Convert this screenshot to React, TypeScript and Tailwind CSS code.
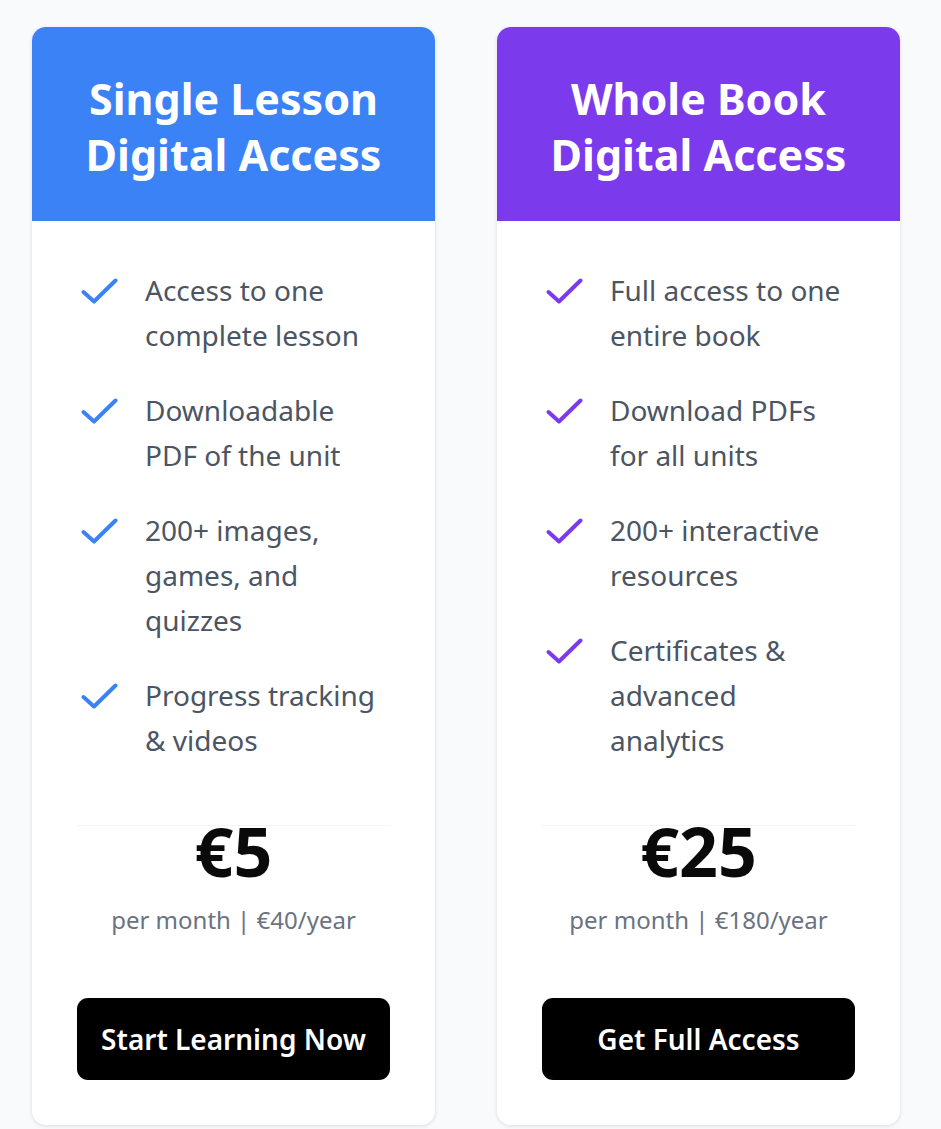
import React from "react";

type Plan = {
  title: string[];
  headerClass: string;
  checkColor: string;
  features: string[][];
  price: string;
  sub: string;
  cta: string;
};

const plans: Plan[] = [
  {
    title: ["Single Lesson", "Digital Access"],
    headerClass: "bg-[#3b82f6]",
    checkColor: "#3b82f6",
    features: [
      ["Access to one", "complete lesson"],
      ["Downloadable", "PDF of the unit"],
      ["200+ images,", "games, and", "quizzes"],
      ["Progress tracking", "& videos"],
    ],
    price: "€5",
    sub: "per month | €40/year",
    cta: "Start Learning Now",
  },
  {
    title: ["Whole Book", "Digital Access"],
    headerClass: "bg-[#7c3aed]",
    checkColor: "#7c3aed",
    features: [
      ["Full access to one", "entire book"],
      ["Download PDFs", "for all units"],
      ["200+ interactive", "resources"],
      ["Certificates &", "advanced", "analytics"],
    ],
    price: "€25",
    sub: "per month | €180/year",
    cta: "Get Full Access",
  },
];

function Check({ color }: { color: string }) {
  return (
    <svg width="37" height="26" viewBox="0 0 37 26" fill="none">
      <polyline
        points="2.5,14 13,23.5 34.5,2.5"
        stroke={color}
        strokeWidth="4"
        strokeLinecap="round"
        strokeLinejoin="round"
      />
    </svg>
  );
}

function Card({ plan }: { plan: Plan }) {
  return (
    <div className="w-[403px] bg-white rounded-[14px] overflow-hidden shadow-[0_1px_4px_rgba(0,0,0,0.12)] flex flex-col">
      <div className={`${plan.headerClass} h-[194px] pt-[5px] flex items-center justify-center`}>
        <h2 className="text-white font-bold text-[43px] leading-[56px] text-center">
          {plan.title.map((l, i) => (
            <div key={i}>{l}</div>
          ))}
        </h2>
      </div>
      <div className="px-[45px] pt-[47px] pb-[45px] flex flex-col">
        <ul className="flex flex-col gap-[30px]">
          {plan.features.map((f, i) => (
            <li key={i} className="flex">
              <div className="w-[45px] h-[45px] shrink-0 flex items-center justify-center pt-[1px]">
                <Check color={plan.checkColor} />
              </div>
              <div className="ml-[23px] text-[28px] leading-[45px] text-[#4b5563]">
                {f.map((l, j) => (
                  <div key={j}>{l}</div>
                ))}
              </div>
            </li>
          ))}
        </ul>
        <div className="mt-[62px] border-t border-[#f3f4f6] text-center">
          <div className="text-[68px] leading-[48px] font-bold text-[#0a0a0a] pt-[1px]">{plan.price}</div>
          <div className="mt-[27px] text-[24px] leading-[36px] text-[#6b7280]">{plan.sub}</div>
        </div>
        <button className="mt-[60px] h-[82px] w-full bg-black text-white rounded-[11px] text-[28px] font-semibold">
          {plan.cta}
        </button>
      </div>
    </div>
  );
}

export default function App() {
  return (
    <div
      className="min-h-screen bg-[#f9fafb] pt-[27px] pl-[32px]"
      style={{ fontFamily: '"Noto Sans", "Open Sans", sans-serif' }}
    >
      <div className="flex gap-[62px] items-start">
        {plans.map((p, i) => (
          <Card key={i} plan={p} />
        ))}
      </div>
    </div>
  );
}
